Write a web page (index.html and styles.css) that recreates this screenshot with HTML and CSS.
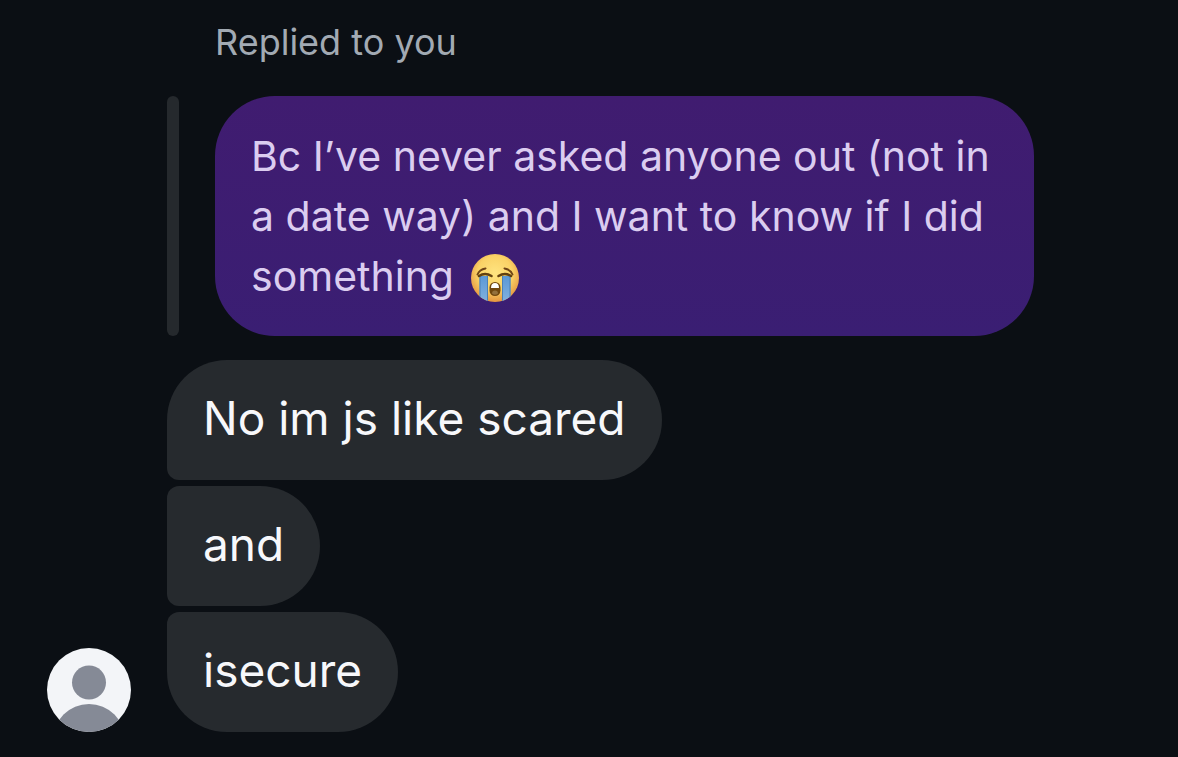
FILE: index.html
```html
<!DOCTYPE html>
<html lang="en">
<head>
    <meta charset="UTF-8">
    <meta name="viewport" content="width=device-width, initial-scale=1.0">
    <title>Messages</title>
    <link rel="stylesheet" href="styles.css">
</head>
<body>
    <main class="thread">
        <svg class="avatar" viewBox="0 0 84 84" role="img" aria-label="Profile picture">
            <clipPath id="avatar-clip"><circle cx="42" cy="42" r="42"/></clipPath>
            <g clip-path="url(#avatar-clip)">
                <rect width="84" height="84" fill="#f3f5f8"/>
                <circle cx="42" cy="34.500" r="17" fill="#858a96"/>
                <circle cx="42" cy="92" r="36" fill="#858a96"/>
            </g>
        </svg>

        <div class="messages">
            <p class="reply-label">Replied to you</p>
            <div class="reply">
                <p class="bubble quoted">Bc I’ve never asked anyone out (not in a date way) and I want to know if I did something <svg class="emoji" viewBox="0 0 50 50" role="img" aria-label="Loudly crying face">
                    <defs>
                        <radialGradient id="face" cx="50%" cy="40%" r="60%">
                            <stop offset="0" stop-color="#ffe480"/>
                            <stop offset="0.6" stop-color="#fad266"/>
                            <stop offset="1" stop-color="#e5953f"/>
                        </radialGradient>
                        <linearGradient id="tear" x1="0" y1="0" x2="0" y2="1">
                            <stop offset="0" stop-color="#5b98d6"/>
                            <stop offset="1" stop-color="#83b2de"/>
                        </linearGradient>
                        <clipPath id="face-clip"><circle cx="25" cy="25" r="24"/></clipPath>
                    </defs>
                    <circle cx="25" cy="25" r="24" fill="url(#face)"/>
                    <g clip-path="url(#face-clip)">
                        <path d="M9.500 23h8.500v27h-8.500zM32 23h8.500v27h-8.500z" fill="url(#tear)"/>
                        <path d="M10 23v27M17.500 23v27M32.500 23v27M40 23v27" stroke="#4c80b5" stroke-width="1"/>
                    </g>
                    <path d="M7.500 21.500q2-5 8-6M34.500 15.500q6 1 8 6" fill="none" stroke="#704616" stroke-width="2" stroke-linecap="round"/>
                    <path d="M9 23q6-4 12.500 0M28.500 23q6.500-4 12.500 0" fill="none" stroke="#62400f" stroke-width="2.500" stroke-linecap="round"/>
                    <rect x="19.500" y="29" width="11" height="14" rx="5.500" fill="#70470f"/>
                    <path d="M21 35q0-5 4-5t4 5z" fill="#fff"/>
                    <path d="M22 40.500q0-3 3-3t3 3q-3 2.500-6 0z" fill="#94713d"/>
                </svg></p>
            </div>
            <p class="bubble first">No im js like scared</p>
            <p class="bubble middle">and</p>
            <p class="bubble last">isecure</p>
        </div>
    </main>
</body>
</html>
```

FILE: styles.css
```css
* {
    box-sizing: border-box;
}

body {
    margin: 0;
    background-color: #0b0f14;
    font-family: Inter, "Liberation Sans", sans-serif;
}

p {
    margin: 0;
}

.thread {
    display: flex;
    align-items: flex-end;
    gap: 36px;
    padding: 20px 144px 24px 47px;
}

.avatar {
    flex-shrink: 0;
    width: 84px;
    height: 84px;
}

.messages {
    flex: 1;
    display: flex;
    flex-direction: column;
    align-items: flex-start;
    gap: 6px;
}

.reply-label {
    margin-bottom: 26px;
    padding-left: 48px;
    color: #a2aab3;
    font-size: 36px;
    line-height: 44px;
}

.reply {
    display: flex;
    gap: 36px;
    margin-bottom: 18px;
}

/* vertical bar beside the quoted message */
.reply::before {
    content: "";
    flex-shrink: 0;
    width: 12px;
    border-radius: 6px;
    background-color: #25292d;
}

.bubble {
    padding: 28px 36px 32px;
    border-radius: 60px;
    background-color: #262a2e;
    color: #f7f8fb;
    font-size: 46px;
    line-height: 60px;
}

.bubble.first {
    border-bottom-left-radius: 12px;
}

.bubble.middle {
    border-top-left-radius: 12px;
    border-bottom-left-radius: 12px;
}

.bubble.last {
    border-top-left-radius: 12px;
}

.bubble.quoted {
    padding: 30px 36px;
    background: linear-gradient(#401c70, #3a1e73);
    color: #dbcdf0;
    font-size: 41px;
}

.emoji {
    display: inline-block;
    width: 50px;
    height: 50px;
    margin: -4px 4px;
    vertical-align: -8px;
}
```
